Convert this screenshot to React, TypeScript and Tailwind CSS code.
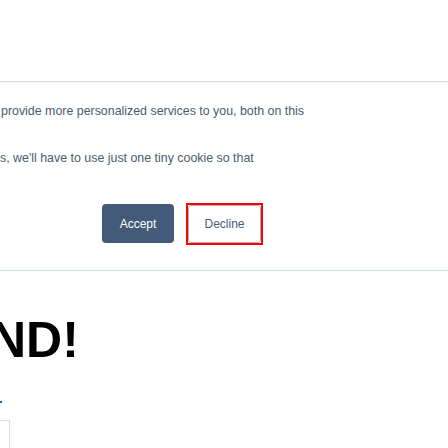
export default function App() {
  return (
    <div className="w-[448px] h-[448px] overflow-hidden bg-white font-['Liberation_Sans',Arial,sans-serif]">
      <div className="border-b border-[#d3dae2] h-[82px]" />
      <div className="border-b border-[#cfdcec] pb-[25px]">
        <div className="pt-[21px] text-[12.4px] leading-[16px] text-[#4b5b70] whitespace-nowrap">
          <p className="pl-[1px]">provide more personalized services to you, both on this</p>
          <p className="mt-[31px]">s, we'll have to use just one tiny cookie so that</p>
        </div>
        <div className="flex items-start gap-[12px] pl-[102px] mt-[37px]">
          <button className="mt-[1px] w-[72px] h-[39px] rounded-[4px] bg-[#435b78] text-white text-[12px]">
            Accept
          </button>
          <div className="w-[77px] h-[42px] border-2 border-[#ff0000]">
            <button className="w-full h-full rounded-[3px] border border-[#a9b3c0] bg-white text-[12px] text-[#4a5d78]">
              Decline
            </button>
          </div>
        </div>
      </div>
      <div className="pt-[44px]">
        <h1 className="-ml-[10px] text-[50px] leading-[50px] font-bold text-black whitespace-nowrap">
          ND!
        </h1>
        <div className="mt-[36px] w-[2px] h-[2px] bg-[#1a5fd0]" />
        <div className="mt-[17px] w-[10px] h-[40px] border-t border-r border-[#dcdcdc]" />
      </div>
    </div>
  );
}
